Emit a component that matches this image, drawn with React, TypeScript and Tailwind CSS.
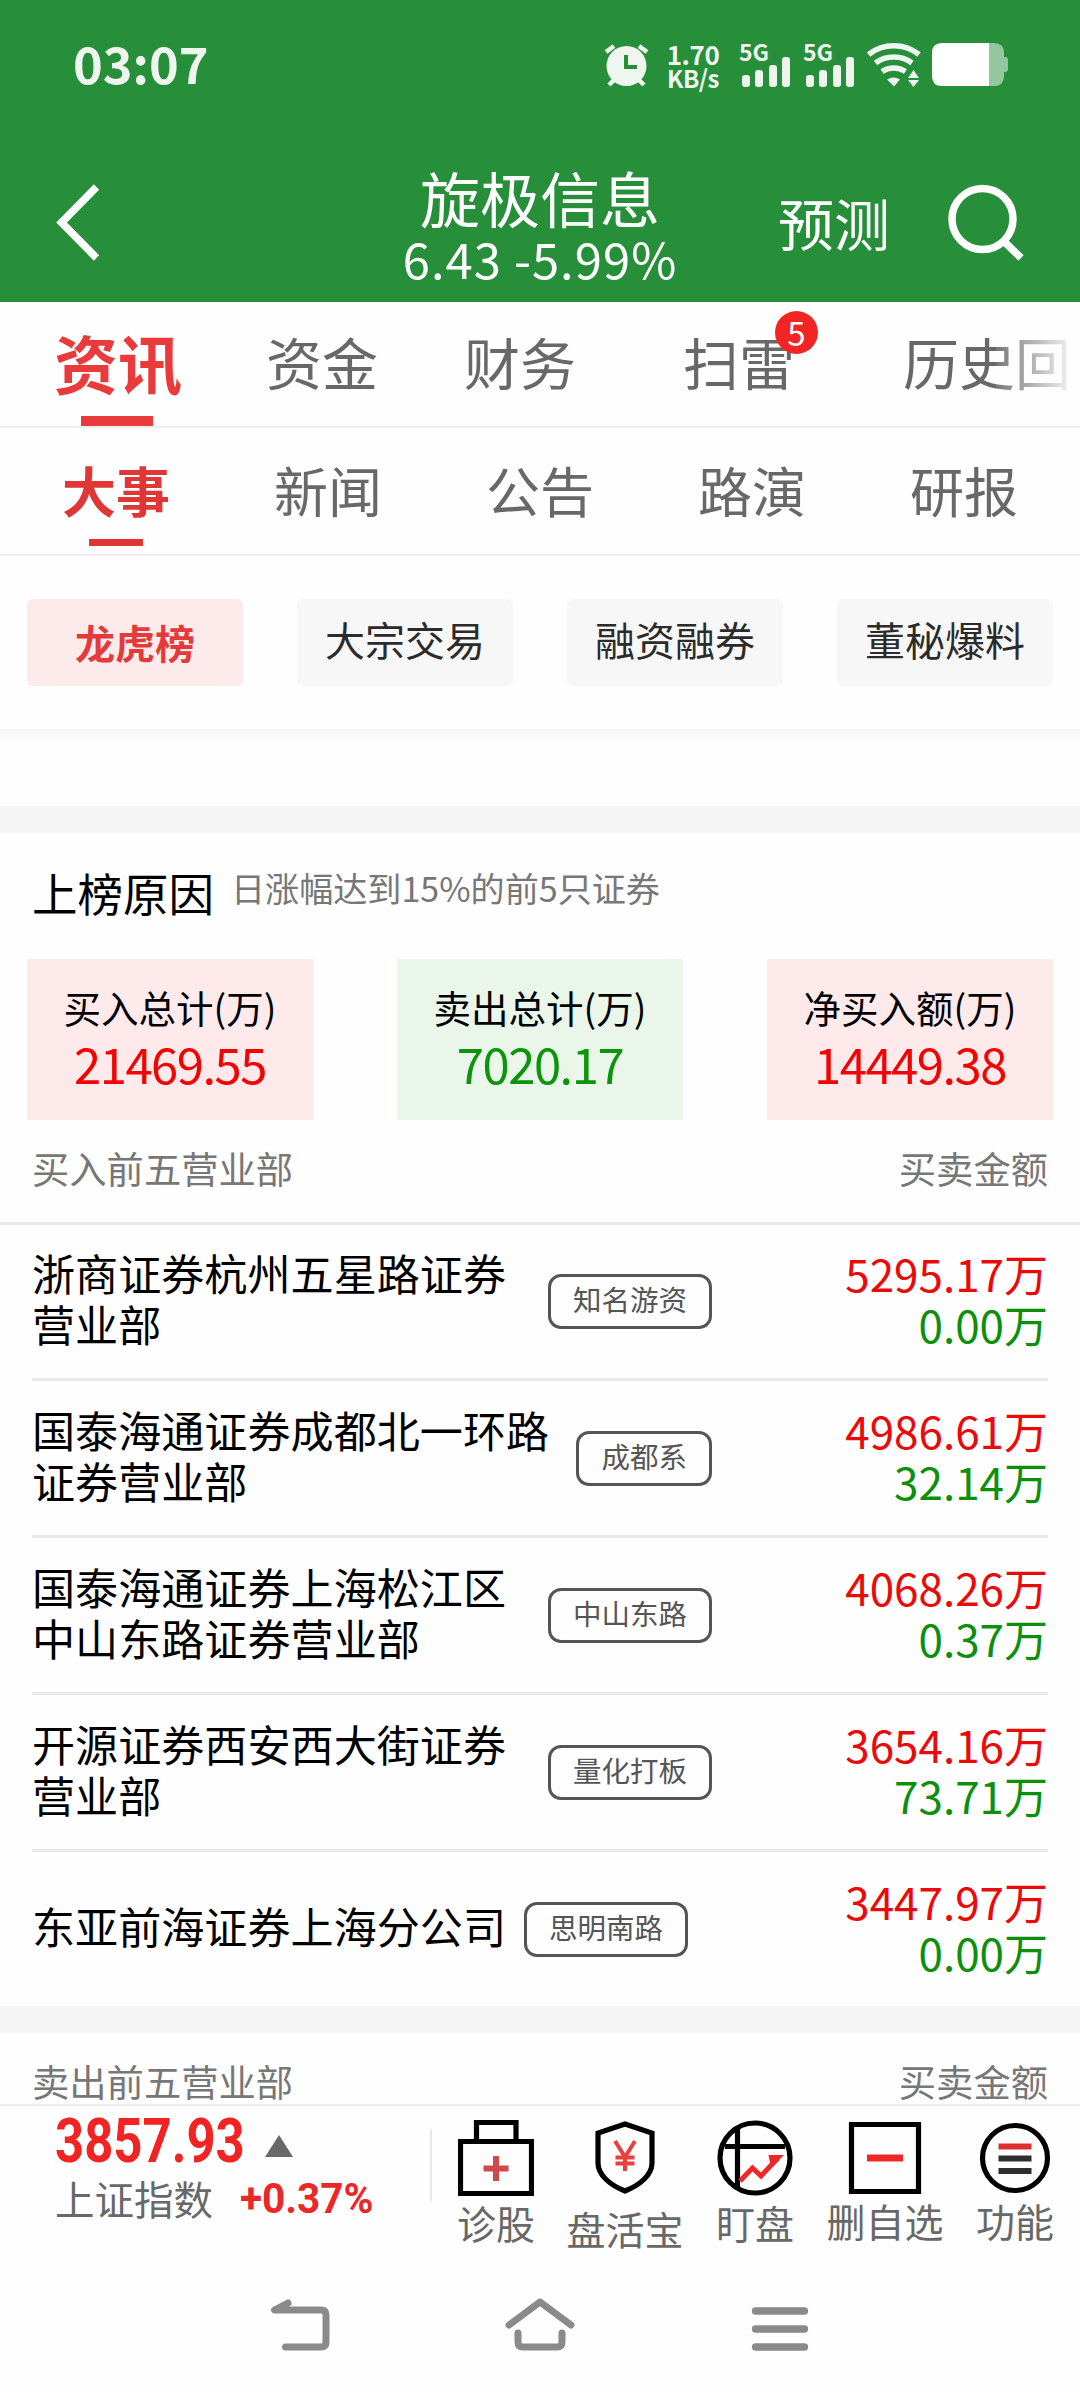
import type { ReactNode } from "react";

type Broker = {
  name: string;
  tag: string;
  buy: string;
  sell: string;
};

const subTabs = ["大事", "新闻", "公告", "路演", "研报"];

const filters = ["龙虎榜", "大宗交易", "融资融券", "董秘爆料"];

const totals = [
  { label: "买入总计(万)", value: "21469.55", type: "buy" },
  { label: "卖出总计(万)", value: "7020.17", type: "sell" },
  { label: "净买入额(万)", value: "14449.38", type: "buy" },
];

const brokers: Broker[] = [
  {
    name: "浙商证券杭州五星路证券营业部",
    tag: "知名游资",
    buy: "5295.17万",
    sell: "0.00万",
  },
  {
    name: "国泰海通证券成都北一环路证券营业部",
    tag: "成都系",
    buy: "4986.61万",
    sell: "32.14万",
  },
  {
    name: "国泰海通证券上海松江区中山东路证券营业部",
    tag: "中山东路",
    buy: "4068.26万",
    sell: "0.37万",
  },
  {
    name: "开源证券西安西大街证券营业部",
    tag: "量化打板",
    buy: "3654.16万",
    sell: "73.71万",
  },
  {
    name: "东亚前海证券上海分公司",
    tag: "思明南路",
    buy: "3447.97万",
    sell: "0.00万",
  },
];

export default function App() {
  return (
    <div className="flex h-[2392px] w-[1080px] flex-col overflow-hidden bg-[#fefefe] font-['Noto_Sans_CJK_SC',sans-serif] whitespace-nowrap">
      <header className="h-[302px] shrink-0 bg-[#278e3a] text-white">
        <StatusBar />
        <TitleBar />
      </header>

      <MainTabs />
      <SubTabs />
      <FilterBar />

      <main className="flex min-h-0 flex-1 flex-col overflow-hidden">
        <div className="h-[77px] shrink-0 bg-gradient-to-b from-[#f6f6f6] to-[#fefefe] to-[14px]" />
        <div className="h-[27px] shrink-0 bg-[#f5f5f5]" />

        <section className="shrink-0">
          <div className="flex h-[126px] items-start pl-[32px]">
            <h2 className="mt-[26px] text-[45.500px] leading-[66px] text-black">
              上榜原因
            </h2>
            <p className="mt-[28px] ml-[17px] text-[34.100px] leading-[52px] text-[#777]">
              日涨幅达到15%的前5只证券
            </p>
          </div>

          <div className="flex justify-between px-[27px]">
            {totals.map((total) => (
              <div
                key={total.label}
                className={`flex h-[161px] w-[286px] flex-col items-center pt-[23px] ${
                  total.type === "buy" ? "bg-[#ffeaeb]" : "bg-[#eaf6ea]"
                }`}
              >
                <p className="text-[37.500px] leading-[50px] text-black">
                  {total.label}
                </p>
                <p
                  className={`text-[49px] leading-[62px] tracking-[-1.500px] ${
                    total.type === "buy" ? "text-[#f00404]" : "text-[#0c940c]"
                  }`}
                >
                  {total.value}
                </p>
              </div>
            ))}
          </div>

          <SectionHeader title="买入前五营业部" />
        </section>

        <section className="shrink-0 border-t-[3px] border-[#e9e9e9] px-[32px]">
          {brokers.map((broker, index) => (
            <BrokerRow
              key={broker.name}
              broker={broker}
              first={index === 0}
              last={index === brokers.length - 1}
            />
          ))}
        </section>

        <div className="h-[27px] shrink-0 bg-[#f5f5f5]" />
        <SectionHeader title="卖出前五营业部" />
      </main>

      <BottomBar />
      <SystemNav />
    </div>
  );
}

function StatusBar() {
  return (
    <div className="flex h-[129px] items-center text-[#eef6ef]">
      <div className="mt-[-6px] ml-[73px] w-[531px] text-[50.500px] leading-[60px] font-bold">
        03:07
      </div>

      <svg width="45" height="44" viewBox="0 0 45 44" fill="none">
        <path
          d="M2 9 10 3M43 9 35 3M5 42 12 35M40 42 33 35"
          stroke="currentColor"
          strokeWidth="4.5"
        />
        <circle cx="22.500" cy="23" r="20" fill="currentColor" />
        <path d="M22 12V24H33" stroke="#278e3a" strokeWidth="4" />
      </svg>

      <div className="mt-[2px] ml-[17px] w-[54px] text-center font-bold">
        <p className="text-[26px] leading-[24px] tracking-[-0.500px]">1.70</p>
        <p className="text-[24px] leading-[23px] tracking-[-0.500px]">KB/s</p>
      </div>

      <Signal className="ml-[20px]" />
      <Signal className="ml-[14px]" />

      <svg
        width="55"
        height="44"
        viewBox="0 0 55 44"
        fill="none"
        stroke="currentColor"
        strokeWidth="5.500"
        className="ml-[13px]"
      >
        <path d="M1.500 11.500A41 41 0 0 1 52 11.500M8.500 20A31 31 0 0 1 45 20M15 28.500A21 21 0 0 1 38.500 28.500" />
        <path
          d="M20 36.500Q26.500 32.500 33 36.500L27 43.500ZM41 35 46.500 27 52 35ZM41 37H52L46.500 44Z"
          fill="currentColor"
          stroke="none"
        />
      </svg>

      <svg width="77" height="44" viewBox="0 0 77 44" className="ml-[10px]">
        <path
          d="M56 0H62Q72 0 72 10V14H73Q76 14 76 17V26Q76 29 73 29H72V33Q72 43 62 43H56Z"
          fill="#94c79d"
        />
        <path d="M10 0H57V43H10Q0 43 0 33V10Q0 0 10 0Z" fill="#fff" />
      </svg>
    </div>
  );
}

function Signal({ className }: { className: string }) {
  return (
    <div className={`relative h-[44px] w-[50px] ${className}`}>
      <span className="absolute top-[-3px] left-[-1px] text-[23px] leading-[22px] font-bold">
        5G
      </span>
      <div className="flex h-full items-end gap-[5.500px] pl-[2px]">
        <i className="h-[12px] w-[8px] rounded-[3px] bg-current" />
        <i className="h-[17px] w-[8px] rounded-[3px] bg-current" />
        <i className="h-[22px] w-[8px] rounded-[3px] bg-current" />
        <i className="h-[30px] w-[8px] rounded-[3px] bg-current" />
      </div>
    </div>
  );
}

function TitleBar() {
  return (
    <div className="flex h-[173px] items-start">
      <svg
        width="48"
        height="80"
        viewBox="0 0 48 80"
        fill="none"
        stroke="#fff"
        strokeWidth="7.500"
        className="mt-[53px] ml-[55px]"
      >
        <path d="M41.500 5 6.500 40.500 41.500 76" />
      </svg>

      <div className="mt-[36px] ml-[277px] w-[320px] text-center">
        <h1 className="text-[60px] leading-[64px]">旋极信息</h1>
        <p className="text-[49px] leading-[58px] tracking-[1px]">
          6.43 -5.99%
        </p>
      </div>

      <div className="mt-[60px] ml-[78px] text-[56px] leading-[66px]">
        预测
      </div>

      <svg
        width="78"
        height="78"
        viewBox="0 0 78 78"
        fill="none"
        stroke="#fff"
        strokeWidth="7.500"
        className="mt-[54px] ml-[57px]"
      >
        <circle cx="35.500" cy="36" r="30.500" />
        <path d="M55.500 57 74 75" />
      </svg>
    </div>
  );
}

function MainTabs() {
  return (
    <nav className="relative flex h-[126px] shrink-0 items-center border-b-2 border-[#ededed] pb-[6px] pl-[54px] text-[56px] leading-[70px] text-[#686868]">
      <span className="relative text-[64px] font-bold text-[#e93b3b]">
        资讯
        <i className="absolute bottom-[-30px] left-[27px] h-[10px] w-[72px] bg-[#e93b3b]" />
      </span>
      <span className="ml-[84px]">资金</span>
      <span className="ml-[86px]">财务</span>
      <span className="relative ml-[107px]">
        扫雷
        <b className="absolute top-[-15px] left-[92px] h-[43px] w-[43px] rounded-full bg-[#f32424] text-center text-[33px] leading-[42px] font-normal text-white">
          5
        </b>
      </span>
      <span className="ml-[108px]">历史回</span>
      <div className="absolute top-0 right-0 h-[124px] w-[84px] bg-gradient-to-r from-[#fefefe]/10 to-[#fefefe] to-[82px]" />
    </nav>
  );
}

function SubTabs() {
  return (
    <nav className="flex h-[128px] shrink-0 items-center border-b-2 border-[#ededed] px-[10px] pb-[2px] text-[54px] leading-[70px] text-[#686868]">
      {subTabs.map((tab, index) => (
        <span
          key={tab}
          className={`relative flex-1 text-center ${
            index === 0 ? "font-bold text-[#e03636]" : ""
          }`}
        >
          {tab}
          {index === 0 && (
            <i className="absolute bottom-[-21px] left-[79px] h-[7px] w-[54px] bg-[#e03636]" />
          )}
        </span>
      ))}
    </nav>
  );
}

function FilterBar() {
  return (
    <div className="flex h-[173px] shrink-0 items-center justify-between px-[27px]">
      {filters.map((filter, index) => (
        <button
          key={filter}
          className={`h-[87px] w-[216px] rounded-[6px] text-[40px] leading-[60px] ${
            index === 0
              ? "bg-[#fdebeb] pb-[2px] font-bold text-[#e33b3b]"
              : "bg-[#f7f7f7] pb-[8px] text-[#2b2b2b]"
          }`}
        >
          {filter}
        </button>
      ))}
    </div>
  );
}

function SectionHeader({ title }: { title: string }) {
  return (
    <div className="flex h-[102px] shrink-0 justify-between px-[32px] pt-[28px] text-[37.300px] leading-[40px] text-[#777]">
      <span>{title}</span>
      <span>买卖金额</span>
    </div>
  );
}

function BrokerRow({
  broker,
  first,
  last,
}: {
  broker: Broker;
  first: boolean;
  last: boolean;
}) {
  return (
    <div
      className={`flex items-center justify-between ${
        last
          ? "h-[154px]"
          : first
            ? "h-[156px] border-b-[3px] border-[#e9e9e9]"
            : "h-[157px] border-b-[3px] border-[#e9e9e9] pt-px"
      }`}
    >
      <div className="flex w-[680px] items-center">
        <p className="mt-[-7px] min-w-0 text-[43.100px] leading-[51px] break-all whitespace-normal text-black">
          {broker.name}
        </p>
        <div className="grow-0 basis-[18px]" />
        <span
          className={`h-[55px] shrink-0 rounded-[13px] border-[3px] border-[#555] px-[22px] text-[28.500px] leading-[44px] text-[#555] ${
            last ? "" : "ml-auto"
          }`}
        >
          {broker.tag}
        </span>
      </div>

      <div className="mt-[-5px] text-right text-[44px] leading-[51px]">
        <p className="text-[#ea0a0a]">{broker.buy}</p>
        <p className="text-[#0c900c]">{broker.sell}</p>
      </div>
    </div>
  );
}

function BottomBar() {
  return (
    <footer className="flex h-[166px] shrink-0 border-t-2 border-[#ededed]">
      <div className="w-[430px] pl-[55px]">
        <div className="flex h-[68px] items-center">
          <span className="mt-[2px] w-[210px] origin-left scale-x-[0.82] font-[Roboto] text-[62px] leading-[66px] font-bold text-[#f22323]">
            3857.93
          </span>
          <svg width="28" height="22" viewBox="0 0 28 22" className="mt-[12px]">
            <path d="M14 0 28 22H0Z" fill="#686868" />
          </svg>
        </div>
        <div className="mt-[-2px] flex items-center text-[39.500px] leading-[48px] text-[#686868]">
          上证指数
          <span className="mt-[3px] ml-[27px] origin-left scale-x-[0.965] font-[Roboto] text-[42px] font-bold text-[#ea2828]">
            +0.37%
          </span>
        </div>
      </div>

      <div className="mt-[23px] h-[72px] w-[2px] bg-[#e8e8e8]" />

      <Action label="诊股" className="ml-[6px] w-[116px]">
        <path d="M18.500 21V2.500H58V21M2.500 21.500H73.500V73.500H2.500Z" />
        <path d="M38 36V61M25.500 48.500H50.500" stroke="#cf4a4a" strokeWidth="6" />
      </Action>
      <Action label="盘活宝" className="ml-[6px] w-[130px] [&>span]:mt-[6px]">
        <path d="M38 4 65 13V43C65 55 53 65 38 71C23 65 11 55 11 43V13Z" />
        <path
          d="M28 21 38 37 48 21M38 36V51M28.500 37.500H47.500M28.500 43.500H47.500"
          stroke="#e93f3f"
          strokeWidth="4"
        />
      </Action>
      <Action label="盯盘" className="w-[130px]">
        <circle cx="38" cy="38" r="35" />
        <path d="M8 26.500H68M20.500 9V67" />
        <path
          d="M23 61 35.500 48 44 56 61 38"
          stroke="#ee2828"
          strokeWidth="5"
        />
        <path d="M51.500 35H67L54 48Z" fill="#ee2828" stroke="none" />
      </Action>
      <Action label="删自选" className="w-[130px] [&>span]:mt-[-2px]">
        <path d="M4.500 4.500H71.500V71.500H4.500Z" />
        <path d="M20 38H56" stroke="#ee2828" strokeWidth="7" />
      </Action>
      <Action label="功能" className="w-[130px] [&>span]:mt-[-2px]">
        <circle cx="38" cy="38" r="32.500" />
        <path d="M21.500 26.500H54.500" stroke="#dc3030" strokeWidth="6" />
        <path
          d="M21.500 38.500H54.500M21.500 51H54.500"
          stroke="#2e2e2e"
          strokeWidth="6"
        />
      </Action>
    </footer>
  );
}

function Action({
  label,
  className,
  children,
}: {
  label: string;
  className: string;
  children: ReactNode;
}) {
  return (
    <div
      className={`flex shrink-0 flex-col items-center pt-[14px] text-[39px] leading-[52px] text-[#686868] ${className}`}
    >
      <svg
        width="76"
        height="76"
        viewBox="0 0 76 76"
        fill="none"
        stroke="#000"
        strokeWidth="5.200"
      >
        {children}
      </svg>
      <span>{label}</span>
    </div>
  );
}

function SystemNav() {
  return (
    <div className="flex h-[122px] shrink-0 items-start justify-center gap-[171px] pt-[26px]">
      <svg
        width="68"
        height="60"
        viewBox="0 0 68 60"
        fill="none"
        stroke="#8a8a8a"
        strokeWidth="7"
        strokeLinecap="round"
        strokeLinejoin="round"
      >
        <path d="M23 7 9.500 14H56Q61 14 61 19V46Q61 51 56 51H20.500" />
      </svg>
      <svg
        width="72"
        height="60"
        viewBox="0 0 72 60"
        fill="none"
        stroke="#8a8a8a"
        strokeWidth="7"
        strokeLinecap="round"
        strokeLinejoin="round"
      >
        <path d="M5 29 36 6 67 29M14 37V46Q14 51 19 51H53Q58 51 58 46V37" />
      </svg>
      <svg
        width="68"
        height="60"
        viewBox="0 0 68 60"
        fill="none"
        stroke="#8a8a8a"
        strokeWidth="7.300"
        strokeLinecap="round"
      >
        <path d="M8.500 15H57.500M8.500 33H57.500M8.500 51H57.500" />
      </svg>
    </div>
  );
}
